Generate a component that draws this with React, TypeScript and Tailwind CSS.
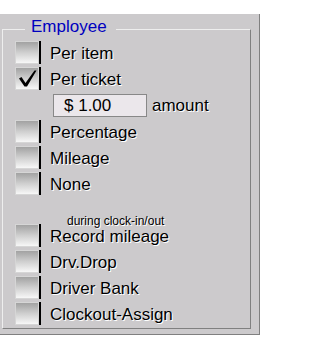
import React from "react";

function Box({ checked = false }: { checked?: boolean }) {
  return (
    <div className="flex h-[23px] shrink-0">
      <div className="relative h-[23px] w-[24px] border border-[#d6d6d6] bg-gradient-to-b from-[#a2a2a2] via-[#cfcfcf] to-[#f7f7f7]">
        {checked && (
          <svg className="absolute left-0 top-0" width="24" height="23" viewBox="0 0 24 23">
            <path d="M3 10.5 L5.5 9 L9.5 15 L18.5 2.5 L20.5 2.5 L11 18.5 L8.5 18.5 Z" fill="#000" />
          </svg>
        )}
      </div>
      <div className="h-[23px] w-[2px] bg-black" />
    </div>
  );
}

function Row({ label, checked = false, cls = "" }: { label: string; checked?: boolean; cls?: string }) {
  return (
    <div className={"flex h-[23px] items-center " + cls}>
      <Box checked={checked} />
      <span className="ml-[9px] pt-[1px] text-[17px] leading-[23px] text-black whitespace-nowrap [text-shadow:1px_1px_0_#ffffff]">
        {label}
      </span>
    </div>
  );
}

export default function App() {
  return (
    <div className="h-[351px] w-[260px] bg-white font-['Liberation_Sans',Arial,sans-serif]">
      <div className="mt-[14px] h-[321px] border-b border-r border-[#808080] bg-[#cccacc] pl-[2px] pr-[8px] pt-[15px]">
        <div className="relative h-[300px] border border-l-[#eeeeee] border-t-[#eeeeee] border-r-[#808080] border-b-[#808080] pl-[12px] pt-[11px]">
          <span className="absolute left-[22px] top-[-12px] bg-[#cccacc] pl-[6px] pr-[9px] text-[17px] leading-[17px] text-[#0000bf] whitespace-nowrap">
            Employee
          </span>
          <div className="flex flex-col">
            <Row label="Per item" />
            <Row label="Per ticket" checked cls="mt-[3px]" />
            <div className="mt-[4px] flex h-[23px] items-center">
              <div className="ml-[38px] flex h-[23px] w-[94px] items-center border border-[#888888] bg-[#ebe7eb] pl-[10px] text-[17px] leading-[21px] text-black">
                $ 1.00
              </div>
              <span className="ml-[5px] text-[17px] leading-[23px] text-black [text-shadow:1px_1px_0_#ffffff]">
                amount
              </span>
            </div>
            <Row label="Percentage" cls="mt-[3px]" />
            <Row label="Mileage" cls="mt-[3px]" />
            <Row label="None" cls="mt-[3px]" />
            <div className="mt-[20px] h-[12px] pl-[52px] text-[12px] leading-[12px] text-black whitespace-nowrap [text-shadow:1px_1px_0_#ffffff]">
              during clock-in/out
            </div>
            <Row label="Record mileage" cls="mt-[-3px]" />
            <Row label="Drv.Drop" cls="mt-[3px]" />
            <Row label="Driver Bank" cls="mt-[3px]" />
            <Row label="Clockout-Assign" cls="mt-[3px]" />
          </div>
        </div>
      </div>
    </div>
  );
}
